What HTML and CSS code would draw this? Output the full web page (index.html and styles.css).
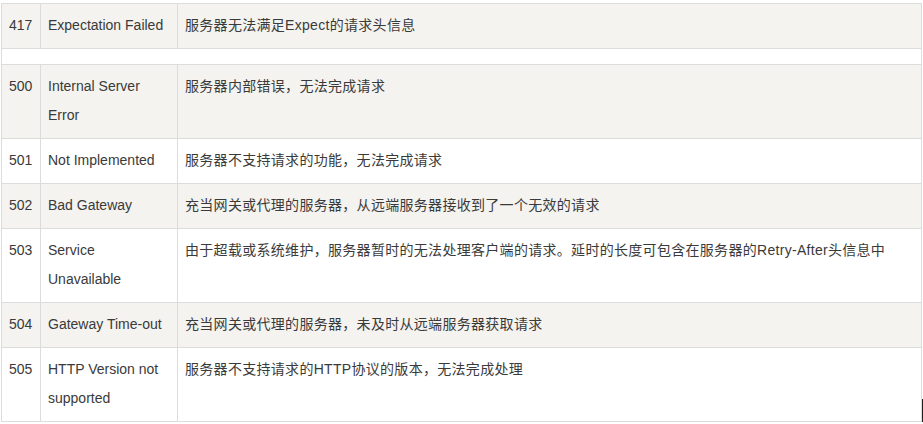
FILE: index.html
```html
<!DOCTYPE html>
<html lang="zh-CN">
<head>
<meta charset="utf-8">
<title>HTTP 状态码</title>
<link rel="stylesheet" href="styles.css">
</head>
<body>
<div class="wrap">
<table class="codes">
  <colgroup>
    <col class="c-code">
    <col class="c-name">
    <col class="c-desc">
  </colgroup>
  <tbody>
    <tr class="alt"><td>417</td><td>Expectation Failed</td><td>服务器无法满足Expect的请求头信息</td></tr>
    <tr class="gap"><td colspan="3"></td></tr>
    <tr class="alt"><td>500</td><td>Internal Server Error</td><td>服务器内部错误，无法完成请求</td></tr>
    <tr><td>501</td><td>Not Implemented</td><td>服务器不支持请求的功能，无法完成请求</td></tr>
    <tr class="alt"><td>502</td><td>Bad Gateway</td><td>充当网关或代理的服务器，从远端服务器接收到了一个无效的请求</td></tr>
    <tr><td>503</td><td>Service Unavailable</td><td>由于超载或系统维护，服务器暂时的无法处理客户端的请求。延时的长度可包含在服务器的Retry-After头信息中</td></tr>
    <tr class="alt"><td>504</td><td>Gateway Time-out</td><td>充当网关或代理的服务器，未及时从远端服务器获取请求</td></tr>
    <tr><td>505</td><td>HTTP Version not supported</td><td>服务器不支持请求的HTTP协议的版本，无法完成处理</td></tr>
  </tbody>
</table>
<span class="edge"></span>
</div>
</body>
</html>
```

FILE: styles.css
```css
html, body {
  margin: 0;
  padding: 0;
  background: #ffffff;
}

body {
  font-family: "Liberation Sans", Arial, "Noto Sans CJK SC", sans-serif;
  font-size: 14px;
  color: #3a3a3a;
}

.wrap {
  position: relative;
  padding: 3px 0 0 1px;
  width: 922px;
}

.codes {
  border-collapse: collapse;
  width: 921px;
  table-layout: fixed;
}

.c-code { width: 39px; }
.c-name { width: 137px; }

.codes td {
  border: 1px solid #dcdcdc;
  padding: 7px 6px 8px 7px;
  line-height: 29px;
  vertical-align: top;
  text-align: left;
}

.codes td:last-child {
  letter-spacing: 0.3px;
}

.codes tr.alt td {
  background: #f4f3ef;
}

.codes tr.gap td {
  padding: 0;
  height: 15px;
  line-height: 15px;
  background: #ffffff;
}

.codes td:first-child {
  padding-left: 7px;
  padding-right: 0;
}

.edge {
  position: absolute;
  right: 0;
  bottom: 0;
  width: 1px;
  height: 23px;
  background: #222222;
}
```
